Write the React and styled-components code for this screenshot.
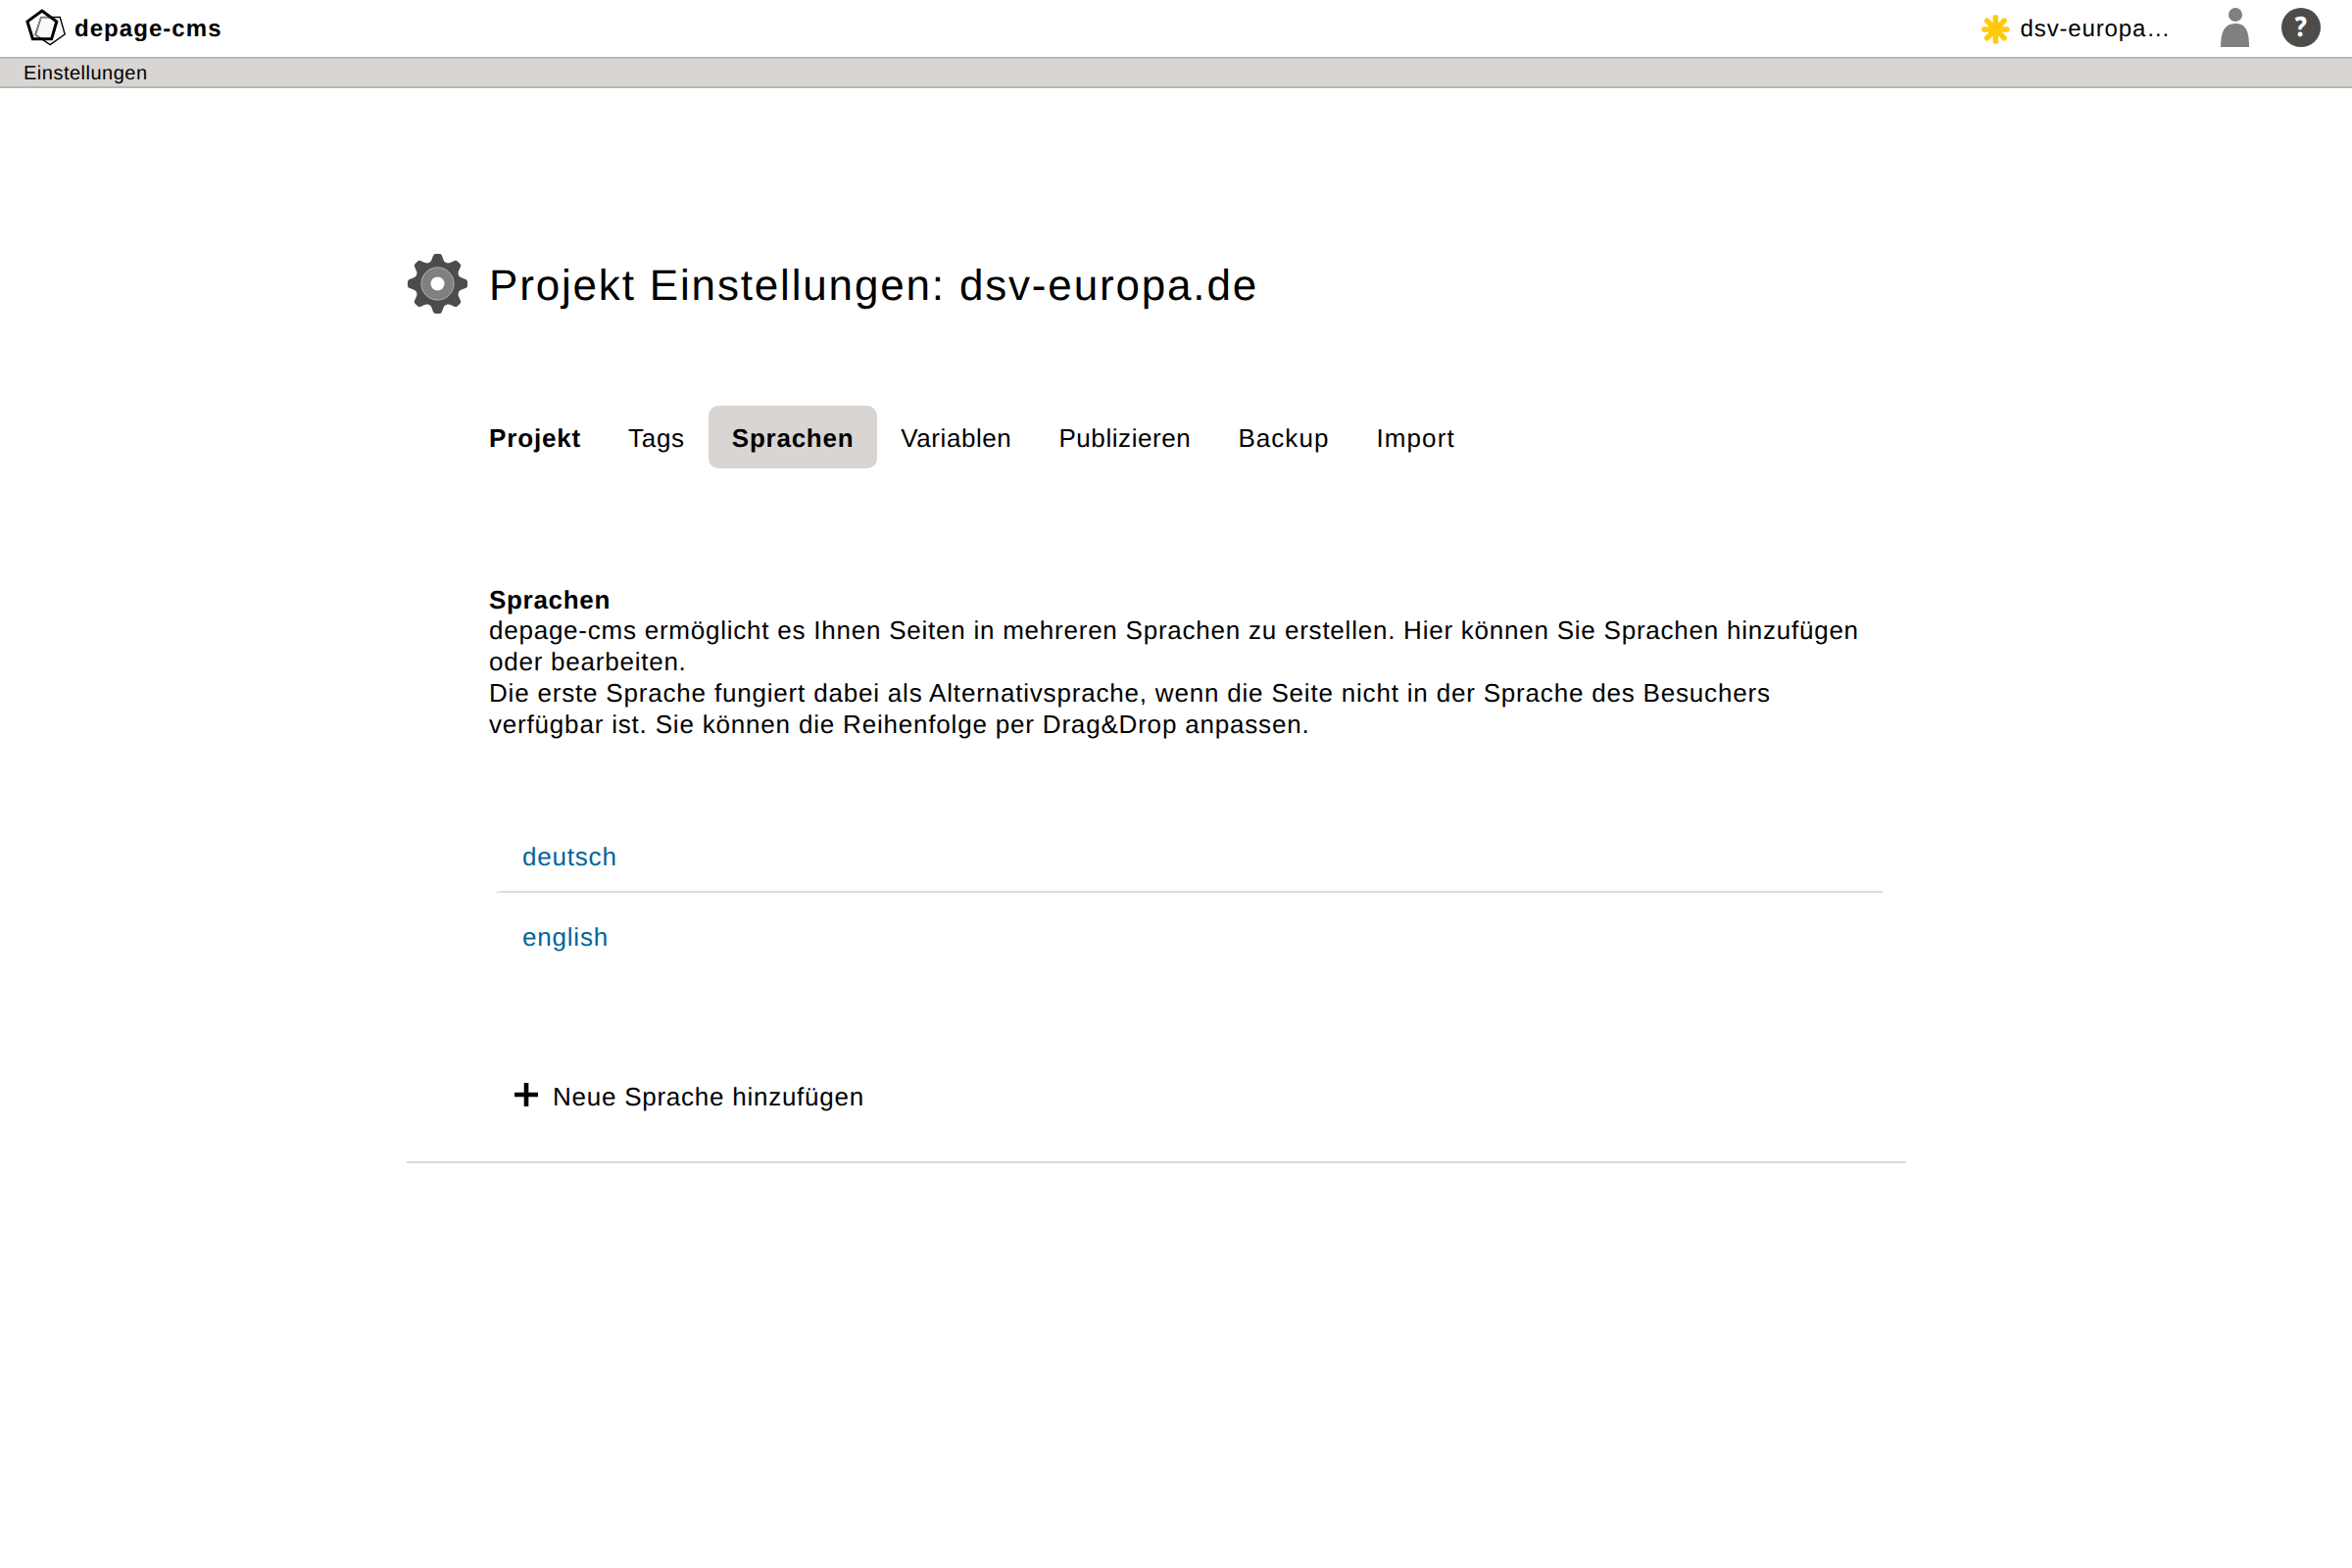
import React from "react";
import styled, { createGlobalStyle } from "styled-components";

const Global = createGlobalStyle`
  *, *::before, *::after { box-sizing: border-box; }
  body {
    margin: 0;
    background: #fff;
    color: #000;
    font: 26px/32px "Liberation Sans", Arial, sans-serif;
    letter-spacing: 0.8px;
    text-rendering: geometricPrecision;
  }
  h1, h2, p, ul { margin: 0; padding: 0; }
  ul { list-style: none; }
  a { color: inherit; text-decoration: none; }
`;

const Page = styled.div`
  min-height: 1600px;
`;

const TopBar = styled.header`
  display: flex;
  justify-content: space-between;
  height: 58px;
  padding: 0 32px 0 26px;
`;

const Brand = styled.a`
  display: flex;
  align-items: flex-start;
  font-size: 24px;
  font-weight: 700;
  letter-spacing: 1.05px;
  white-space: nowrap;

  svg { margin-top: 9px; margin-right: 8px; }
  span { margin-top: 14px; }
`;

const UserNav = styled.nav`
  display: flex;
  align-items: flex-start;
`;

const ProjectLink = styled.a`
  display: flex;
  width: 193px;
  margin-right: 51px;
  font-size: 24px;
  letter-spacing: 0.85px;
  white-space: nowrap;

  svg { margin-top: 14px; margin-right: 11px; }
  span { margin-top: 14px; }
`;

const UserLink = styled.a`
  margin: 8px 32px 0 0;
  svg { display: block; }
`;

const HelpLink = styled.a`
  display: flex;
  justify-content: center;
  width: 40px;
  height: 40px;
  margin-top: 8px;
  border-radius: 50%;
  background: #4d4c4a;
  color: #fff;
  font: 800 28px/39px "Noto Sans", sans-serif;
  letter-spacing: 0;

  span { transform: scaleX(0.88); }
`;

const SubBar = styled.div`
  height: 32px;
  padding: 1px 24px 0;
  border: solid #bab6b3;
  border-width: 2px 0;
  background: #d9d5d2;
  font-size: 20px;
  line-height: 28px;
  letter-spacing: 0.5px;
`;

const Content = styled.main`
  width: 1530px;
  margin: 169px 0 0 415px;
  padding-bottom: 56px;
  border-bottom: 2px solid #dddad8;
`;

const TitleRow = styled.div`
  display: flex;
  align-items: flex-start;
  height: 155px;
  padding-left: 1px;
  svg { margin-right: 22px; }
`;

const Title = styled.h1`
  margin-top: 6px;
  font-size: 44px;
  line-height: 54px;
  font-weight: 400;
  letter-spacing: 1.83px;
  white-space: nowrap;
`;

const Tabs = styled.nav`
  display: flex;
  margin-left: 60px;
`;

const Tab = styled.a`
  padding: 17px 24px 15px;
  border-radius: 10px;
  font-weight: ${(p) => (p.$bold ? 700 : 400)};
  letter-spacing: ${(p) => p.$tracking}px;
  background: ${(p) => (p.$active ? "#d9d5d2" : "transparent")};
  white-space: nowrap;
`;

const Intro = styled.section`
  margin: 117px 0 0 84px;
`;

const IntroHeading = styled.h2`
  height: 32px;
  padding-top: 1px;
  font-size: 26px;
  line-height: 32px;
  letter-spacing: 0.7px;
`;

const Paragraph = styled.p`
  letter-spacing: ${(p) => p.$tracking}px;
  white-space: nowrap;
`;

const LanguageList = styled.ul`
  margin: 74px 24px 0 89px;
`;

const Language = styled.li`
  height: 82px;
  padding: 29px 0 0 21px;
  border: solid transparent;
  border-width: 0 0 2px 8px;
  border-bottom-color: ${(p) => (p.$last ? "transparent" : "#dddad8")};
  color: #00659b;
`;

const AddButton = styled.a`
  display: flex;
  align-items: flex-start;
  height: 24px;
  margin: 112px 0 0 110px;
  letter-spacing: 0.75px;
  white-space: nowrap;
  svg { margin-right: 15px; }
  span { margin-top: -2px; }
`;

function Logo() {
  return (
    <svg width="42" height="38" viewBox="0 0 42 38">
      <path d="M15.9 8.6 35.2 8.4 40.2 26 25.2 36.6 10 26.5Z" fill="#fafafa" stroke="#000" strokeWidth="1.4" />
      <path d="M28 8.6H16L10.4 26.5 14 29" fill="none" stroke="#858585" strokeWidth="1.6" />
      <path d="M16.8 2 31.8 13 26.6 30.8H7.4L1.9 13Z" fill="none" stroke="#000" strokeWidth="3" />
    </svg>
  );
}

function Asterisk() {
  return (
    <svg width="30" height="32" viewBox="-15 -16 30 32">
      <path d="M0-12.8V12.8M-12.2 0H12.2M-9.3-9.3 9.3 9.3M9.3-9.3-9.3 9.3" stroke="#ffca0a" strokeWidth="5.7" strokeLinecap="round" />
    </svg>
  );
}

function Person() {
  return (
    <svg width="30" height="41" viewBox="0 0 30 41">
      <circle cx="15" cy="7" r="7" fill="#808080" />
      <path d="M0 40C0 24 4 16 15 16S29 24 29 40Z" fill="#808080" />
    </svg>
  );
}

function Gear() {
  const tooth = "M-11-20.5C-6-21.5-6-25-4.5-28.5Q-4-30.5-2-30.5H2Q4-30.5 4.5-28.5C6-25 6-21.5 11-20.5L11 0H-11Z";
  return (
    <svg width="61" height="61" viewBox="-30.5 -30.5 61 61">
      {[0, 45, 90, 135, 180, 225, 270, 315].map((angle) => (
        <path key={angle} d={tooth} fill="#4d4c4a" transform={`rotate(${angle})`} />
      ))}
      <circle r="16.6" fill="#808080" stroke="#b3b3b3" strokeWidth="1" />
      <circle r="7" fill="#fff" />
    </svg>
  );
}

function Plus() {
  return (
    <svg width="24" height="24" viewBox="0 0 24 24">
      <path d="M12 0V24M0 12H24" stroke="#000" strokeWidth="4.6" />
    </svg>
  );
}

const tabs = [
  { label: "Projekt", bold: true, tracking: 0.85 },
  { label: "Tags", tracking: 0.7 },
  { label: "Sprachen", bold: true, active: true, tracking: 0.75 },
  { label: "Variablen", tracking: 0.57 },
  { label: "Publizieren", tracking: 0.58 },
  { label: "Backup", tracking: 1.05 },
  { label: "Import", tracking: 1.1 },
];

export default function App() {
  return (
    <Page>
      <Global />
      <TopBar>
        <Brand><Logo /><span>depage-cms</span></Brand>
        <UserNav>
          <ProjectLink><Asterisk /><span>dsv-europa…</span></ProjectLink>
          <UserLink><Person /></UserLink>
          <HelpLink><span>?</span></HelpLink>
        </UserNav>
      </TopBar>
      <SubBar>Einstellungen</SubBar>
      <Content>
        <TitleRow>
          <Gear />
          <Title>Projekt Einstellungen: dsv-europa.de</Title>
        </TitleRow>
        <Tabs>
          {tabs.map((t) => (
            <Tab key={t.label} $bold={t.bold} $active={t.active} $tracking={t.tracking}>{t.label}</Tab>
          ))}
        </Tabs>
        <Intro>
          <IntroHeading>Sprachen</IntroHeading>
          <Paragraph $tracking={0.765}>
            depage-cms ermöglicht es Ihnen Seiten in mehreren Sprachen zu erstellen. Hier können Sie Sprachen hinzufügen
            <br />
            oder bearbeiten.
          </Paragraph>
          <Paragraph $tracking={0.81}>
            Die erste Sprache fungiert dabei als Alternativsprache, wenn die Seite nicht in der Sprache des Besuchers
            <br />
            verfügbar ist. Sie können die Reihenfolge per Drag&amp;Drop anpassen.
          </Paragraph>
        </Intro>
        <LanguageList>
          <Language>deutsch</Language>
          <Language $last>english</Language>
        </LanguageList>
        <AddButton><Plus /><span>Neue Sprache hinzufügen</span></AddButton>
      </Content>
    </Page>
  );
}
